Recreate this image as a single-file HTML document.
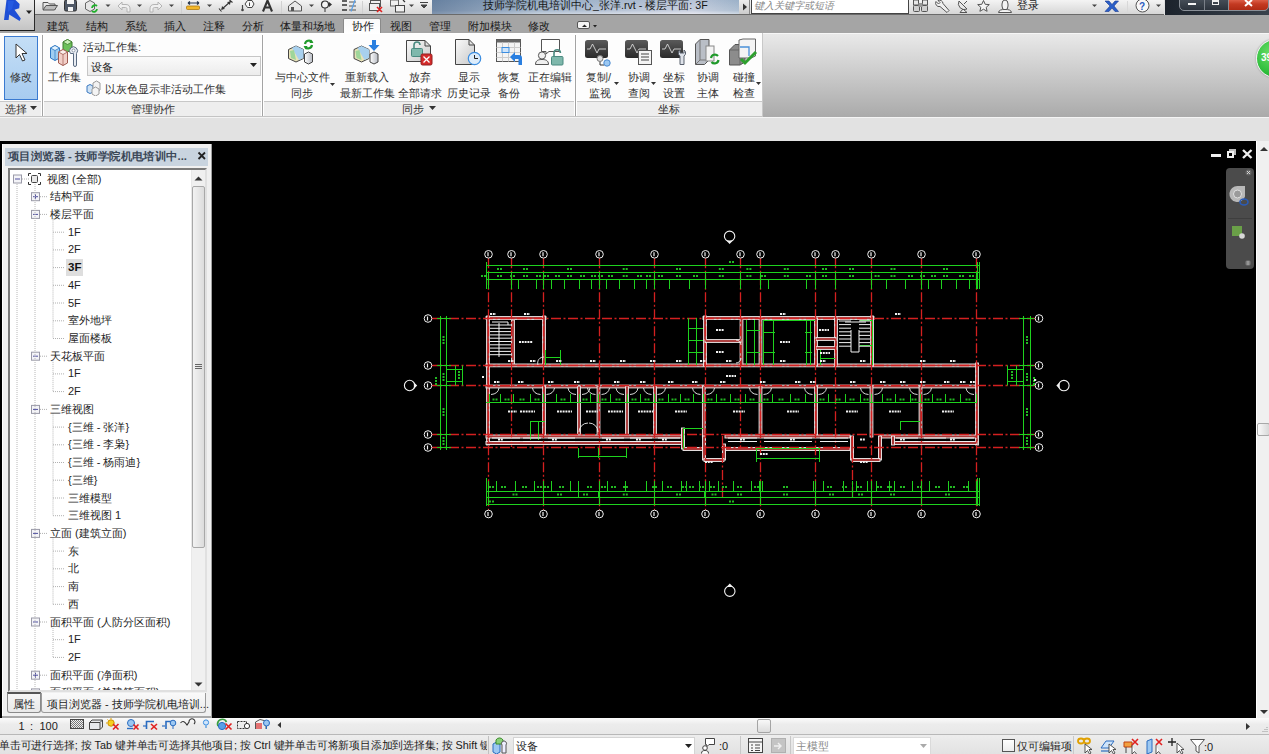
<!DOCTYPE html>
<html><head><meta charset="utf-8">
<style>
*{margin:0;padding:0;box-sizing:border-box}
html,body{width:1269px;height:754px;overflow:hidden;background:#e1e1e1;font-family:"Liberation Sans",sans-serif;font-size:12px;color:#222}
.a{position:absolute}
.t{position:absolute;white-space:nowrap;line-height:1}
</style></head><body>
<!-- QAT bar -->
<div class="a" style="left:0;top:0;width:1164px;height:15px;background:linear-gradient(#f4f4f4,#d6d6d6);border-bottom:1px solid #6a6a6a"></div>
<!-- QAT icons -->
<svg class="a" style="left:0;top:0" width="1269" height="15" viewBox="0 0 1269 15">
<path d="M43 2.5H48L49.5 4H55V9.5H43Z" fill="#e8e8e8" stroke="#555"/>
<path d="M43 10L46 5.5H57.5L54.5 10Z" fill="#bdbdbd" stroke="#555"/>
<rect x="64.5" y="0" width="12" height="11" rx="1.5" fill="#4f5866" stroke="#333"/>
<rect x="67" y="0" width="7" height="4" fill="#f4f4f4"/>
<rect x="68" y="7" width="5" height="4" fill="#f4f4f4"/>
<path d="M85.5 3L90 0.5L94.5 3V9L90 11.5L85.5 9Z" fill="#e6e6e6" stroke="#666"/>
<path d="M92 8a3 3 0 0 1 5 -2M97 9a3 3 0 0 1 -5 2" stroke="#1fb02a" stroke-width="1.8" fill="none"/>
<path d="M105.5 4.5H110.5L108 7Z" fill="#444"/>
<path d="M118 6L122 2V4.5H126C129 4.5 130 6.5 130 9V12H127V9C127 8 126.5 7.5 125.5 7.5H122V10Z" fill="#f0f0f0" stroke="#b4b4b4"/>
<path d="M137 4.5H142L139.5 7Z" fill="#444"/>
<path d="M162 6L158 2V4.5H154C151 4.5 150 6.5 150 9V12H153V9C153 8 153.5 7.5 154.5 7.5H158V10Z" fill="#f0f0f0" stroke="#b4b4b4"/>
<path d="M169 4.5H174L171.5 7Z" fill="#444"/>
<path d="M181.5 1V14" stroke="#d0d0d0"/>
<path d="M188 3H199M188 3L190 1.5M188 3L190 4.5M199 3L197 1.5M199 3L197 4.5" stroke="#2a3a50" stroke-width="1.2" fill="none"/>
<rect x="186.5" y="6" width="13" height="3.5" rx="1" fill="#f2b72a" stroke="#b07a10" stroke-width="0.8"/>
<path d="M207 4.5H212L209.5 7Z" fill="#444"/>
<path d="M221.5 9.5L230.5 1.5M219 8.5L221.5 11.5M229.5 0L232.5 2.5" stroke="#333" stroke-width="1.1" fill="none"/><path d="M221.5 9.5L222 6L225 9ZM230.5 1.5L230 5L227 2Z" fill="#333"/>
<path d="M245 4L247.5 0.5H252L254 4L252 7.5H247.5Z" fill="#f8f8f8" stroke="#444"/><path d="M249.5 2.5V6" stroke="#333" stroke-width="0.9"/>
<path d="M242.5 5V9.5" stroke="#444" stroke-width="1.2"/><circle cx="242.5" cy="10" r="1.3" fill="#444"/>
<path d="M263 11.5L267.5 0.5L272 11.5M264.8 7.5H270.2" stroke="#333" stroke-width="2.1" fill="none"/>
<path d="M281.5 1V14" stroke="#d0d0d0"/>
<path d="M288.5 6L295 1L301.5 6V11H288.5Z" fill="#e8e8e8" stroke="#555"/>
<rect x="291" y="7" width="3" height="4" fill="#555"/>
<path d="M309 4.5H314L311.5 7Z" fill="#444"/>
<circle cx="325" cy="4.5" r="3.5" fill="#f4f4f4" stroke="#333" stroke-width="1.2"/>
<path d="M328.5 4.5L332 4.5L329 2ZM329 4.5L332 4.5L329 7Z" fill="#333"/>
<path d="M325 8V12" stroke="#333"/>
<path d="M342 1H347M342 5H347M342 10H347" stroke="#333" stroke-width="1.5"/>
<path d="M349 2H356M349 6H356M349 10H356" stroke="#555" stroke-width="1"/>
<path d="M351 11.5L355 0" stroke="#5aa0e8" stroke-width="1.2"/>
<path d="M362.5 1V14" stroke="#d0d0d0"/>
<rect x="370.5" y="0.5" width="10" height="6" fill="#f0f0f0" stroke="#555"/>
<rect x="369.5" y="3.5" width="10" height="7" fill="#f0f0f0" stroke="#555"/>
<path d="M377 7L382 12M382 7L377 12" stroke="#e02020" stroke-width="1.6"/>
<rect x="390.5" y="0" width="8" height="6" fill="#f0f0f0" stroke="#666"/>
<rect x="395.5" y="5.5" width="9" height="6.5" fill="#f0f0f0" stroke="#444"/>
<path d="M403 0L405 2" stroke="#333" stroke-width="1.2"/>
<path d="M409 4.5H414L411.5 7Z" fill="#444"/>
<path d="M420 2.5H428M421 5H427L424 8Z" stroke="#444" fill="#444" stroke-width="1"/>
</svg>
<!-- title -->
<div class="a" style="left:432px;top:0;width:307px;height:14px;background:linear-gradient(90deg,rgba(50,80,120,0.55),rgba(50,80,120,0.15) 35%,rgba(255,230,240,0.2) 85%,rgba(60,90,130,0.1)),linear-gradient(#a6bbd0,#bccbdb 75%,#dfe7ef)"></div>
<div class="t" style="left:483px;top:0px;font-size:10.7px;color:#161616">技师学院机电培训中心_张洋.rvt - 楼层平面: 3F</div>
<!-- search -->
<div class="a" style="left:739px;top:0;width:11px;height:14px;background:linear-gradient(#eee,#ccc);border-right:1px solid #888"></div>
<div class="a" style="left:751px;top:0;width:158px;height:14px;background:#fff;border:1px solid #444;border-top:none"></div><svg class="a" style="left:742px;top:3px" width="6" height="8"><path d="M1 0.5L5 4L1 7.5Z" fill="#333"/></svg>
<div class="t" style="left:754px;top:1px;font-size:10px;color:#888;font-style:italic">键入关键字或短语</div>
<svg class="a" style="left:905px;top:0" width="260" height="15" viewBox="905 0 260 15">
<rect x="913.5" y="0" width="5" height="5" fill="#e8e8e8" stroke="#555"/><rect x="922.5" y="0" width="5" height="5" fill="#e8e8e8" stroke="#555"/>
<rect x="913.5" y="5.5" width="6" height="6" rx="1" fill="#cfcfcf" stroke="#555"/><rect x="921.5" y="5.5" width="6" height="6" rx="1" fill="#cfcfcf" stroke="#555"/><rect x="918.5" y="3" width="4" height="4" fill="#999"/>
<path d="M936 1.5a3.5 3.5 0 0 0 4 5L947 12.5L949 10.5L943 3.5a3.5 3.5 0 0 0 -5 -3L940 2.5L938.5 4Z" fill="#f0f0f0" stroke="#555"/>
<path d="M959 1a6 6 0 0 0 8 8Z" fill="#e8e8e8" stroke="#555"/><path d="M963 9L960 12.5H967Z" fill="#e8e8e8" stroke="#555"/><path d="M964 4L967 1" stroke="#555"/>
<path d="M983.5 0.5L985.2 4.3L989.3 4.6L986.2 7.3L987.1 11.3L983.5 9.2L979.9 11.3L980.8 7.3L977.7 4.6L981.8 4.3Z" fill="#f4f4f4" stroke="#555"/>
<path d="M1002 4a3 4 0 0 1 6 0V6a3 4 0 0 1 -6 0Z" fill="#f4f4f4" stroke="#555"/><path d="M998.5 12.5C999 10 1001 9.5 1005 9.5S1011 10 1011.5 12.5Z" fill="#f4f4f4" stroke="#555"/>
<path d="M1092 4.5H1097L1094.5 7Z" fill="#444"/>
<path d="M1105 1H1109L1112 4.5L1115 1H1118.5L1114 6L1118.5 11.5H1115L1112 8L1109 11.5H1105L1110 6Z" fill="#2b5fc8" stroke="#1a3a90" stroke-width="0.6"/>
<path d="M1127.5 1V14" stroke="#d8d8d8"/>
<circle cx="1142.5" cy="5.5" r="6.5" fill="#f8f8f8" stroke="#555"/>
<text x="1139" y="9.5" font-family="Liberation Sans" font-weight="bold" font-size="10" fill="#2a5bc0">?</text>
<path d="M1156 4.5H1161L1158.5 7Z" fill="#444"/>
</svg>
<div class="t" style="left:1017px;top:0px;font-size:11px;color:#1a1a1a">登录</div>
<!-- window ctrl -->
<div class="a" style="left:1165px;top:0;width:104px;height:15px;background:linear-gradient(90deg,#1c232c,#2e3640 60%,#3a424c)"></div>
<div class="a" style="left:1179px;top:-3px;width:90px;height:14px;border:1px solid #8a9098;border-radius:0 0 5px 5px;background:linear-gradient(#4a525c,#2c333c)"></div>
<div class="a" style="left:1204px;top:-2px;width:1px;height:12px;background:#7a8088"></div>
<div class="a" style="left:1228px;top:-3px;width:41px;height:14px;border:1px solid #8a9098;border-radius:0 0 5px 0;background:linear-gradient(#e8705a,#c43a22 50%,#b02a14)"></div>
<div class="a" style="left:1188px;top:3px;width:8px;height:2px;background:#f4f4f4"></div>
<div class="a" style="left:1212px;top:0px;width:7px;height:5px;border:1.5px solid #f0f0f0;border-top-width:2px"></div>
<svg class="a" style="left:1244px;top:0" width="10" height="7"><path d="M1 0L8 6M8 0L1 6" stroke="#fff" stroke-width="2"/></svg>
<!-- tab bar -->
<div class="a" style="left:0;top:15px;width:1269px;height:18px;background:#a5a5a5"></div>
<div class="a" style="left:343px;top:18px;width:38px;height:16px;background:linear-gradient(#fafafa,#ffffff);border:1px solid #8a8a8a;border-bottom:none;border-radius:2px 2px 0 0"></div>
<div class="t" style="left:47px;top:20.5px;font-size:11px;color:#1a1a1a">建筑</div>
<div class="t" style="left:86px;top:20.5px;font-size:11px;color:#1a1a1a">结构</div>
<div class="t" style="left:125px;top:20.5px;font-size:11px;color:#1a1a1a">系统</div>
<div class="t" style="left:164px;top:20.5px;font-size:11px;color:#1a1a1a">插入</div>
<div class="t" style="left:203px;top:20.5px;font-size:11px;color:#1a1a1a">注释</div>
<div class="t" style="left:242px;top:20.5px;font-size:11px;color:#1a1a1a">分析</div>
<div class="t" style="left:280px;top:20.5px;font-size:11px;color:#1a1a1a">体量和场地</div>
<div class="t" style="left:352px;top:20.5px;font-size:11px;color:#1a1a1a">协作</div>
<div class="t" style="left:390px;top:20.5px;font-size:11px;color:#1a1a1a">视图</div>
<div class="t" style="left:429px;top:20.5px;font-size:11px;color:#1a1a1a">管理</div>
<div class="t" style="left:468px;top:20.5px;font-size:11px;color:#1a1a1a">附加模块</div>
<div class="t" style="left:528px;top:20.5px;font-size:11px;color:#1a1a1a">修改</div>
<div class="a" style="left:577px;top:21px;width:13px;height:8px;background:#f4f4f4;border:1px solid #555;border-radius:2px"></div>
<svg class="a" style="left:578px;top:22px" width="20" height="8"><path d="M4 5L6.5 2.5L9 5Z" fill="#222"/><path d="M15 3H19L17 5.5Z" fill="#222"/></svg>
<!-- app button -->
<div class="a" style="left:0;top:0;width:35px;height:31px;background:linear-gradient(#ececec,#c4c4c4);border-right:1.5px solid #2a2a2a;border-bottom:1.5px solid #1a1a1a"></div>
<svg class="a" style="left:0;top:0" width="34" height="30"><path d="M6.5 0H15.5L19.6 4L19.2 8.2L14.5 9.8L20.8 18.5L19.6 21L9.2 14.5L8.6 20H4Z" fill="#1f4fd6"/><path d="M8 1H14L12 9L8 12Z" fill="#2a62ea" opacity="0.6"/><path d="M26 10.5H32L29 14Z" fill="#222"/></svg>
<!-- ribbon -->
<div class="a" style="left:0;top:33px;width:763px;height:84px;background:#fdfdfd;border-top:1px solid #fff"></div>
<div class="a" style="left:763px;top:33px;width:506px;height:84px;background:linear-gradient(#e9e9e9,#aaaaaa);border-top:1px solid #f6f6f6"></div>
<div class="a" style="left:0;top:101px;width:763px;height:16px;background:#eeeeee;border-top:1px solid #c8c8c8;border-bottom:1px solid #c4c4c4"></div>
<div class="a" style="left:42px;top:35px;width:1px;height:81px;background:#a4a4a4;box-shadow:-1px 0 #fff,1px 0 #fff"></div>
<div class="a" style="left:262px;top:35px;width:1px;height:81px;background:#a4a4a4;box-shadow:-1px 0 #fff,1px 0 #fff"></div>
<div class="a" style="left:575px;top:35px;width:1px;height:81px;background:#a4a4a4;box-shadow:-1px 0 #fff,1px 0 #fff"></div>
<div class="a" style="left:762px;top:33px;width:1px;height:84px;background:#c8c8c8"></div>
<!-- panel select -->
<div class="a" style="left:4px;top:36px;width:34px;height:64px;background:linear-gradient(#c4def6,#a8ccf0);border:1px solid #3a7ad0"></div>
<svg class="a" style="left:14px;top:43px" width="14" height="20"><path d="M2 1V15L5.5 11.5L8.5 18L11 17L8 10.5H13Z" fill="#fff" stroke="#333" stroke-width="1"/></svg>
<div class="t" style="left:10px;top:72px;font-size:11px;color:#333">修改</div>
<div class="t" style="left:5px;top:104px;font-size:11px;color:#333">选择</div>
<svg class="a" style="left:30px;top:106px" width="8" height="5"><path d="M0 0H7L3.5 4Z" fill="#333"/></svg>
<!-- panel worksets -->
<svg class="a" style="left:48px;top:38px" width="34" height="30">
<path d="M2.5 10L7 7.5L11.5 10V20L7 22.5L2.5 20Z" fill="#9fcdf0" stroke="#2f78c4"/>
<path d="M2.5 10L7 7.5L11.5 10L7 12.5Z" fill="#e4f2fc" stroke="#2f78c4" stroke-width="0.8"/>
<path d="M7 12.5V22.5" stroke="#2f78c4" stroke-width="0.7"/>
<path d="M15 4L19.5 1.5L24 4V11.5L19.5 14L15 11.5Z" fill="#6cc05a" stroke="#3a7a2a"/>
<path d="M15 4L19.5 1.5L24 4L19.5 6.5Z" fill="#c8f0b8" stroke="#3a7a2a" stroke-width="0.8"/>
<path d="M10.5 14L15 11.5L19.5 14V25L15 27.5L10.5 25Z" fill="#f2cfc8" stroke="#a05a50"/>
<path d="M10.5 14L15 11.5L19.5 14L15 16.5Z" fill="#fbeeea" stroke="#a05a50" stroke-width="0.8"/>
<path d="M15 16.5V27.5" stroke="#a05a50" stroke-width="0.7"/>
<path d="M22.5 15.5a4 4 0 1 1 6 0V27a1.5 1.5 0 0 1 -3 0h0V15.5Z" fill="#e8ecf2" stroke="#5a6a80"/>
<circle cx="25.5" cy="12.5" r="1.5" fill="#fff" stroke="#5a6a80" stroke-width="0.6"/>
</svg>
<div class="t" style="left:48px;top:72px;font-size:11px;color:#333">工作集</div>
<div class="t" style="left:83px;top:42px;font-size:11px;color:#333">活动工作集:</div>
<div class="a" style="left:87px;top:56px;width:174px;height:20px;background:linear-gradient(#fafafa,#ececec);border:1px solid #c6c6c6"></div>
<div class="t" style="left:91px;top:62px;font-size:11px;color:#222">设备</div>
<svg class="a" style="left:250px;top:63px" width="8" height="5"><path d="M0 0H7L3.5 4Z" fill="#222"/></svg>
<svg class="a" style="left:86px;top:80px" width="16" height="16"><path d="M1 6L4 4.5L7 6V12L4 13.5L1 12Z" fill="#cfe3f5" stroke="#3a78c0"/><path d="M7 3L10.5 1L14 3V10L10.5 12L7 10Z" fill="#f2f2f2" stroke="#9a9a9a"/><path d="M6 9L9.5 7L13 9V14L9.5 16L6 14Z" fill="#f4f4f4" stroke="#9a9a9a"/></svg>
<div class="t" style="left:105px;top:84px;font-size:11px;color:#333">以灰色显示非活动工作集</div>
<div class="t" style="left:131px;top:104px;font-size:11px;color:#333">管理协作</div>
<!-- panel sync -->
<div class="t" style="left:275px;top:72px;font-size:11px;color:#333">与中心文件</div>
<div class="t" style="left:291px;top:87.5px;font-size:11px;color:#333">同步</div>
<svg class="a" style="left:330px;top:83px" width="6" height="4"><path d="M0 0H5L2.5 3Z" fill="#333"/></svg>
<div class="t" style="left:345px;top:72px;font-size:11px;color:#333">重新载入</div>
<div class="t" style="left:340px;top:87.5px;font-size:11px;color:#333">最新工作集</div>
<div class="t" style="left:409px;top:72px;font-size:11px;color:#333">放弃</div>
<div class="t" style="left:398px;top:87.5px;font-size:11px;color:#333">全部请求</div>
<div class="t" style="left:458px;top:72px;font-size:11px;color:#333">显示</div>
<div class="t" style="left:447px;top:87.5px;font-size:11px;color:#333">历史记录</div>
<div class="t" style="left:498px;top:72px;font-size:11px;color:#333">恢复</div>
<div class="t" style="left:498px;top:87.5px;font-size:11px;color:#333">备份</div>
<div class="t" style="left:528px;top:72px;font-size:11px;color:#333">正在编辑</div>
<div class="t" style="left:539px;top:87.5px;font-size:11px;color:#333">请求</div>
<div class="t" style="left:402px;top:104px;font-size:11px;color:#333">同步</div>
<svg class="a" style="left:429px;top:106px" width="8" height="5"><path d="M0 0H7L3.5 4Z" fill="#333"/></svg>
<!-- panel coord -->
<div class="t" style="left:586px;top:72px;font-size:11px;color:#333">复制/</div>
<div class="t" style="left:589px;top:87.5px;font-size:11px;color:#333">监视</div>
<div class="t" style="left:628px;top:72px;font-size:11px;color:#333">协调</div>
<div class="t" style="left:628px;top:87.5px;font-size:11px;color:#333">查阅</div>
<div class="t" style="left:663px;top:72px;font-size:11px;color:#333">坐标</div>
<div class="t" style="left:663px;top:87.5px;font-size:11px;color:#333">设置</div>
<div class="t" style="left:697px;top:72px;font-size:11px;color:#333">协调</div>
<div class="t" style="left:697px;top:87.5px;font-size:11px;color:#333">主体</div>
<div class="t" style="left:733px;top:72px;font-size:11px;color:#333">碰撞</div>
<div class="t" style="left:733px;top:87.5px;font-size:11px;color:#333">检查</div>
<svg class="a" style="left:614px;top:82px" width="6" height="4"><path d="M0 0H5L2.5 3Z" fill="#333"/></svg>
<svg class="a" style="left:651px;top:82px" width="6" height="4"><path d="M0 0H5L2.5 3Z" fill="#333"/></svg>
<svg class="a" style="left:756px;top:82px" width="6" height="4"><path d="M0 0H5L2.5 3Z" fill="#333"/></svg>
<div class="t" style="left:658px;top:104px;font-size:11px;color:#333">坐标</div>
<svg class="a" style="left:0;top:0" width="1269" height="140" viewBox="0 0 1269 140">
<defs>
<linearGradient id="mon" x1="0" y1="0" x2="0" y2="1"><stop offset="0" stop-color="#5a5a5a"/><stop offset="1" stop-color="#2a2a2a"/></linearGradient>
<linearGradient id="doc" x1="0" y1="0" x2="1" y2="1"><stop offset="0" stop-color="#fafafa"/><stop offset="1" stop-color="#c8c8c8"/></linearGradient>
<linearGradient id="cyl" x1="0" y1="0" x2="1" y2="0"><stop offset="0" stop-color="#fff"/><stop offset="1" stop-color="#b8bcc4"/></linearGradient>
</defs>
<!-- sync -->
<g stroke="#444" stroke-width="1">
<path d="M288.5 49.5L296 46L303.5 49.5V58.5L296 62L288.5 58.5Z" fill="#e8e2b8"/>
<path d="M292 48L296 46L303.5 49.5V58L299 60Z" fill="#a8d0ee" stroke="none"/>
<path d="M290 51L294 50L296 60L291 58Z" fill="#9fd69a" stroke="none"/>
<path d="M304.5 54L308.5 52L312.5 54V62L308.5 64L304.5 62Z" fill="url(#cyl)"/>
</g>
<path d="M305 44a4 4 0 0 1 7 -2M312 45a4 4 0 0 1 -7 2" stroke="#1f9a2a" stroke-width="2.2" fill="none"/>
<path d="M311 39.5L313.5 43L309.5 43Z M306 49.5L303.5 46L307.5 46Z" fill="#1f9a2a"/>
<!-- reload -->
<g stroke="#444" stroke-width="1">
<path d="M354 49.5L361.5 46L369 49.5V58.5L361.5 62L354 58.5Z" fill="#e8e2b8"/>
<path d="M357.5 48L361.5 46L369 49.5V58L364.5 60Z" fill="#a8d0ee" stroke="none"/>
<path d="M355.5 51L359.5 50L361.5 60L356.5 58Z" fill="#9fd69a" stroke="none"/>
<path d="M370 54L374 52L378 54V62L374 64L370 62Z" fill="url(#cyl)"/>
</g>
<path d="M372 40H376V45H379.5L374 51L368.5 45H372Z" fill="#2a7fe0"/>
<!-- relinquish -->
<path d="M406.5 40.5H425L430.5 46V61.5H406.5Z" fill="url(#doc)" stroke="#444"/>
<path d="M425 40.5V46H430.5" fill="none" stroke="#444"/>
<path d="M414 48V45a3 3 0 0 1 6 0" fill="none" stroke="#4a8a80" stroke-width="1.6"/>
<rect x="411.5" y="48.5" width="11" height="8" rx="1" fill="#7fb8ac" stroke="#4a8a80"/>
<rect x="421" y="54" width="11" height="11" rx="1.5" fill="#d42a2a" stroke="#902020"/>
<path d="M423.5 56.5L429.5 62.5M429.5 56.5L423.5 62.5" stroke="#fff" stroke-width="1.3"/>
<!-- history -->
<path d="M455.5 39.5H469L474.5 45V64.5H455.5Z" fill="url(#doc)" stroke="#444"/>
<path d="M469 39.5V45H474.5" fill="none" stroke="#444"/>
<circle cx="474.5" cy="58.5" r="6.2" fill="#dcecfb" stroke="#3b8de0" stroke-width="1.2"/>
<path d="M474.5 55V58.5H478" stroke="#222" stroke-width="1" fill="none"/>
<!-- restore -->
<rect x="496.5" y="39.5" width="24" height="22" fill="#f4f4f4" stroke="#555"/>
<rect x="496.5" y="39.5" width="24" height="3" fill="#666"/>
<path d="M496.5 47.5H520.5M496.5 52.5H520.5M496.5 57.5H520.5M502.5 42.5V61.5M508.5 42.5V61.5M514.5 42.5V61.5" stroke="#ccc" stroke-width="1"/>
<rect x="502" y="47.5" width="7" height="5" fill="#cfe5fb" stroke="#3b8de0"/>
<path d="M510 57L515 52V55H519a3 3 0 0 1 3 3V65H518.5V59H515V62Z" fill="#2a7fe0"/>
<!-- editing requests -->
<path d="M541.5 39.5H559.5V51.5H549L546 54V51.5H541.5Z" fill="#fff" stroke="#555"/>
<circle cx="542" cy="55.5" r="3.6" fill="#f0f0f0" stroke="#555"/>
<path d="M535.5 64.5C535.5 60 539 59.5 542 59.5S548.5 60 548.5 64.5Z" fill="#f0f0f0" stroke="#555"/>
<path d="M554 56V53a3.2 3.2 0 0 1 6.4 0" fill="none" stroke="#4a8a80" stroke-width="1.6"/>
<rect x="551.5" y="56.5" width="11.5" height="8.5" rx="1" fill="#7fb8ac" stroke="#4a8a80"/>
<!-- copy monitor -->
<rect x="585" y="40" width="23" height="18" rx="2.5" fill="url(#mon)"/>
<path d="M587 49H590L592.5 44L597 53L599 49H606" stroke="#d8d8d8" stroke-width="0.9" fill="none"/>
<circle cx="600" cy="58.5" r="3" fill="#ddd" stroke="#777"/>
<path d="M600 62V65H604" stroke="#333" fill="none"/>
<circle cx="607" cy="63" r="3.2" fill="#9cc8f2" stroke="#4a8ad0"/>
<!-- coord review -->
<rect x="625" y="40" width="23" height="18" rx="2.5" fill="url(#mon)"/>
<path d="M627 49H630L632.5 44L637 53L639 49H646" stroke="#d8d8d8" stroke-width="0.9" fill="none"/>
<rect x="638.5" y="50.5" width="13" height="14" fill="#f4f4f4" stroke="#555"/>
<path d="M641 54H649M641 57H649M641 60H649" stroke="#444" stroke-width="1"/>
<!-- coord settings -->
<rect x="660" y="40" width="23" height="18" rx="2.5" fill="url(#mon)"/>
<path d="M662 49H665L667.5 44L672 53L674 49H681" stroke="#d8d8d8" stroke-width="0.9" fill="none"/>
<path d="M680 50a3.6 3.6 0 0 0 0 6V64.5H684V56a3.6 3.6 0 0 0 0 -6V53H680Z" fill="#dfe3ea" stroke="#59606c"/>
<!-- coord host -->
<path d="M695.5 44L700 39.5H709V60L704.5 64.5H695.5Z" fill="#b9bec6" stroke="#555"/>
<path d="M700 39.5V60H709M700 60L695.5 64.5" fill="none" stroke="#777"/>
<rect x="706" y="46" width="8" height="15" fill="#f4f4f4" stroke="#888"/>
<path d="M711 58a4 4 0 0 1 7 -2M718.5 60a4 4 0 0 1 -7 2" stroke="#1f9a2a" stroke-width="2.2" fill="none"/>
<!-- interference -->
<path d="M729.5 50L735 44.5H745V62L740 65H729.5Z" fill="#8c8c8c" stroke="#555"/>
<path d="M729.5 50H740V65M740 50L745 44.5" fill="none" stroke="#666"/>
<path d="M739 40L743 39H755.5V56L751 58H739Z" fill="#f4f4f4" stroke="#666"/>
<path d="M740 47H749V56" stroke="#4a90d8" stroke-width="1.3" fill="none"/>
<path d="M741 59L745 63L756 52" stroke="#2ea02e" stroke-width="3" fill="none"/>
</svg>

<!-- gray bar -->
<div class="a" style="left:0;top:117px;width:1269px;height:24px;background:#e2e2e2;border-top:1px solid #f4f4f4"></div>
<!-- canvas -->
<div class="a" style="left:0;top:141px;width:1256px;height:577px;background:#000"></div>
<!-- vscroll -->
<div class="a" style="left:1256px;top:141px;width:13px;height:577px;background:#f0f0f0;border-left:1px solid #fff"></div>
<svg class="a" style="left:1259px;top:146px" width="10" height="6"><path d="M1 5L5 1L9 5Z" fill="#333"/></svg>
<svg class="a" style="left:1259px;top:709px" width="10" height="6"><path d="M1 1L5 5L9 1Z" fill="#333"/></svg>
<div class="a" style="left:1257px;top:423px;width:13px;height:13px;background:linear-gradient(90deg,#fafafa,#d8d8d8);border:1px solid #a8a8a8;border-radius:2px"></div>
<!-- canvas controls -->
<div class="a" style="left:1211px;top:154px;width:10px;height:3px;background:#f0f0f0"></div>
<div class="a" style="left:1229px;top:149px;width:7px;height:6px;background:#bbb"></div>
<div class="a" style="left:1227px;top:151px;width:7px;height:7px;border:2px solid #f0f0f0;background:#000"></div>
<svg class="a" style="left:1242px;top:149px" width="11" height="10"><path d="M1 1L9.5 9M9.5 1L1 9" stroke="#f0f0f0" stroke-width="2.4"/></svg>
<!-- nav bar -->
<div class="a" style="left:1226px;top:168px;width:28px;height:101px;background:#4b4b4b;border-radius:4px"></div>
<svg class="a" style="left:1226px;top:168px" width="28" height="101">
<circle cx="22.5" cy="4.5" r="3" fill="#666"/><path d="M21 3L24 6M24 3L21 6" stroke="#ddd" stroke-width="0.9"/>
<path d="M11.5 18a8 8 0 1 0 7.5 10.5V18Z" fill="#b8b8b8"/>
<circle cx="11.5" cy="26" r="4" fill="#9a9a9a" stroke="#e0e0e0" stroke-width="1"/>
<path d="M14 34a4 3 0 0 1 8 0a4 3 0 0 1 -8 0" fill="none" stroke="#2a5cb8" stroke-width="1.6"/>
<path d="M2 50.5H26" stroke="#3e3e3e"/>
<rect x="6" y="58" width="10" height="10" fill="#6aa048"/>
<circle cx="16" cy="68" r="2.8" fill="#d8d8d8"/>
<circle cx="22" cy="95" r="3" fill="#666"/><path d="M20.5 94H23.5M20.5 96H23.5" stroke="#ddd" stroke-width="0.8"/>
</svg>
<!-- green sphere -->
<div class="a" style="left:1256px;top:39px;width:39px;height:39px;border-radius:50%;background:radial-gradient(circle at 40% 35%,#6ee06a,#2ebd3c 60%,#229a2e);border:1px solid #f4f4f4;box-shadow:0 0 2px #888"></div>
<div class="t" style="left:1261px;top:53px;font-size:10px;font-weight:bold;color:#fff">39</div>
<!-- view bar -->
<div class="a" style="left:0;top:718px;width:1269px;height:17px;background:linear-gradient(#fbfbfb,#ececec 40%,#e8e8e8);border-bottom:1px solid #b8b8b8"></div>
<div class="t" style="left:18.5px;top:720.5px;font-size:11px;color:#222">1</div><div class="t" style="left:30px;top:720.5px;font-size:11px;color:#222">:</div><div class="t" style="left:39.5px;top:720.5px;font-size:11px;color:#222">100</div>
<svg class="a" style="left:0;top:716px" width="290" height="18" viewBox="0 716 290 18">
<defs><pattern id="chk" width="2" height="2" patternUnits="userSpaceOnUse"><rect width="1" height="1" fill="#777"/><rect x="1" y="1" width="1" height="1" fill="#777"/></pattern></defs>
<rect x="70.5" y="719.5" width="13" height="9" fill="url(#chk)" stroke="#444"/>
<path d="M89.5 722.5L92 720H102.5V727L100 729.5H89.5Z" fill="#e6e8ec" stroke="#444"/><path d="M89.5 722.5H100V729.5M100 722.5L102.5 720" fill="none" stroke="#444"/>
<circle cx="111" cy="723" r="3.2" fill="#f5d020" stroke="#d09000"/><path d="M106 723H107M111 718V719M107.5 719.5L108.3 720.3" stroke="#e0a000"/>
<path d="M113 724L118.5 729.5M118.5 724L113 729.5" stroke="#e02020" stroke-width="1.6"/>
<circle cx="131" cy="723" r="3.5" fill="#9cc8f2" stroke="#2a6cc0"/><path d="M127 728.5H133" stroke="#2a6cc0" stroke-width="1.4"/>
<path d="M133.5 724.5L138.5 729.5M138.5 724.5L133.5 729.5" stroke="#e02020" stroke-width="1.6"/>
<path d="M146.5 729V721.5H154" stroke="#2a6cc0" stroke-width="1.6" fill="none"/><path d="M143 726H146" stroke="#2a6cc0" stroke-width="1.2"/>
<path d="M151 724L157 729.5M157 724L151 729.5" stroke="#e02020" stroke-width="1.6"/>
<path d="M166 729V721.5H172" stroke="#2a6cc0" stroke-width="1.6" fill="none"/><path d="M162 726H165" stroke="#2a6cc0" stroke-width="1.2"/>
<circle cx="173" cy="723" r="2.8" fill="#9cc8f2" stroke="#2a6cc0"/><path d="M173 726V729" stroke="#2a6cc0"/>
<path d="M180.5 723C183 720 185 722 187 725L189 722A3 3 0 1 1 194 724" stroke="#333" stroke-width="1.1" fill="none"/>
<circle cx="206" cy="722.5" r="2.6" fill="#cfe5fb" stroke="#3b8de0"/><path d="M206 725.5V728" stroke="#3b8de0" stroke-width="1.2"/>
<path d="M218 726A4.5 4.5 0 0 1 226.5 722" stroke="#3aa040" stroke-width="1.8" fill="none"/><circle cx="222" cy="726" r="3.6" fill="#5aa0e8" stroke="#2a6cc0"/>
<path d="M225.5 723.5L231.5 729.5M231.5 723.5L225.5 729.5" stroke="#e02020" stroke-width="1.6"/>
<path d="M237.5 721.5H246.5V728.5H237.5Z" fill="none" stroke="#333" stroke-dasharray="2 1"/><circle cx="247" cy="726" r="2.6" fill="#fff" stroke="#333"/>
<path d="M255.5 729V722L260 719.5L266 721V729" fill="none" stroke="#555"/><path d="M257 723V729M259 723V729M261 723V729" stroke="#e02020" stroke-width="1.2"/>
<circle cx="266.5" cy="723" r="3" fill="#9cc8f2" stroke="#2a6cc0"/><path d="M266.5 726V729" stroke="#2a6cc0"/>
<path d="M281 722L277.5 725L281 728Z" fill="#333"/>
</svg>
<!-- h scroll -->
<div class="a" style="left:757px;top:719px;width:14px;height:14px;background:linear-gradient(#f8f8f8,#dcdcdc);border:1px solid #a4a4a4;border-radius:2px"></div>
<svg class="a" style="left:1245px;top:722px" width="24" height="12"><path d="M1 1L5 4.5L1 8Z" fill="#333"/><path d="M21.5 9.5h1M19.5 9.5h1M21.5 7.5h1M17.5 9.5h1M19.5 7.5h1M21.5 5.5h1" stroke="#999"/></svg>
<!-- status -->
<div class="a" style="left:0;top:735px;width:1269px;height:19px;background:linear-gradient(#ededed,#e2e2e2)"></div>
<div class="a" style="left:0;top:734px;width:487px;height:20px;overflow:hidden"><div class="t" style="left:-1px;top:6px;font-size:11px;color:#1a1a1a;transform:scaleX(0.983);transform-origin:0 0">单击可进行选择; 按 Tab 键并单击可选择其他项目; 按 Ctrl 键并单击可将新项目添加到选择集; 按 Shift 键并单击可取消选择</div></div>
<div class="a" style="left:488px;top:736px;width:1px;height:18px;background:#c0c0c0"></div>
<svg class="a" style="left:492px;top:736px" width="16" height="18"><path d="M1 8L4.5 6L8 8V16L4.5 18L1 16Z" fill="#9cc8f2" stroke="#2a6cc0"/><path d="M4 4a4 4 0 0 1 7 0V8H4Z" fill="#8ad07a" stroke="#3b8a2a"/><path d="M10 9a2.5 2.5 0 1 1 4 0V17H10Z" fill="#eef" stroke="#555"/></svg>
<div class="a" style="left:513px;top:737px;width:182px;height:17px;background:#fff;border:1px solid #d4d4d4;border-bottom:none"></div>
<div class="t" style="left:516px;top:741px;font-size:11px;color:#222">设备</div>
<svg class="a" style="left:685px;top:744px" width="8" height="5"><path d="M0 0H7L3.5 4Z" fill="#222"/></svg>
<svg class="a" style="left:700px;top:737px" width="16" height="17"><path d="M5.5 1.5H14.5V7.5H9L7 9.5L6.5 7.5H5.5Z" fill="#fff" stroke="#444"/><circle cx="5" cy="11" r="2.3" fill="#fff" stroke="#444"/><path d="M1.5 16.5C1.5 14 3 13.5 5 13.5S8.5 14 8.5 16.5" fill="#fff" stroke="#444"/></svg>
<div class="t" style="left:719px;top:741px;font-size:11px;color:#222">:0</div>
<div class="a" style="left:740px;top:736px;width:1px;height:18px;background:#c8c8c8"></div>
<svg class="a" style="left:748px;top:738px" width="16" height="16"><rect x="0.5" y="0.5" width="14" height="14" fill="#f6f6f6" stroke="#444"/><path d="M0.5 4H14.5" stroke="#444"/><path d="M3 7H5M7 7H12M3 10H5M7 10H12M3 12.5H5M7 12.5H12" stroke="#444"/></svg>
<svg class="a" style="left:771px;top:738px" width="16" height="16"><rect x="0.5" y="0.5" width="14" height="14" fill="#c4c4c4" stroke="#b0b0b0"/><path d="M3 8H10M7 5L10 8L7 11" stroke="#f0f0f0" stroke-width="1.4" fill="none"/></svg>
<div class="a" style="left:790px;top:736px;width:1px;height:18px;background:#c8c8c8"></div>
<div class="a" style="left:793px;top:737px;width:138px;height:17px;background:#fff;border:1px solid #dadada;border-bottom:none"></div>
<div class="t" style="left:796px;top:741px;font-size:11px;color:#8a8a8a">主模型</div>
<svg class="a" style="left:920px;top:744px" width="8" height="5"><path d="M0 0H7L3.5 4Z" fill="#aaa"/></svg>
<div class="a" style="left:1002px;top:739px;width:13px;height:13px;background:linear-gradient(#fefefe,#ececec);border:1px solid #555"></div>
<div class="t" style="left:1017px;top:741px;font-size:11px;color:#222">仅可编辑项</div>
<div class="a" style="left:1073px;top:736px;width:1px;height:18px;background:#c8c8c8"></div>
<svg class="a" style="left:1075px;top:736px" width="145" height="18" viewBox="1075 736 145 18">
<path d="M1078 741a3 2.5 0 0 1 6 0a3 2.5 0 0 1 -6 0M1084 741a3 2.5 0 0 1 6 0a3 2.5 0 0 1 -6 0" fill="none" stroke="#e0a000" stroke-width="1.8"/>
<path d="M1085 744V753L1087.5 750.5L1089.5 754L1091 753L1089 749.5H1092Z" fill="#fff" stroke="#444" stroke-width="0.9"/>
<path d="M1101 748L1106 741H1114L1109 748Z" fill="#cfe5fb" stroke="#2a6cc0"/><path d="M1101 751H1110" stroke="#2a6cc0" stroke-width="1.2"/>
<path d="M1109 744V753L1111.5 750.5L1113.5 754L1115 753L1113 749.5H1116Z" fill="#fff" stroke="#444" stroke-width="0.9"/>
<path d="M1124 742H1132V747H1124Z" fill="#f2a040" stroke="#c04010"/><path d="M1126 747V753" stroke="#444"/>
<path d="M1132 739L1138 745M1138 739L1132 745" stroke="#e02020" stroke-width="1.6"/>
<path d="M1132 745V754L1134.5 751.5L1136.5 754" fill="#fff" stroke="#444" stroke-width="0.9"/>
<path d="M1147 741L1152 739V752L1147 754Z" fill="#9cc8f2" stroke="#2a6cc0"/><path d="M1156 739L1162 745M1162 739L1156 745" stroke="#e02020" stroke-width="1.6"/>
<path d="M1156 745V754L1158.5 751.5L1160.5 754" fill="#fff" stroke="#444" stroke-width="0.9"/>
<path d="M1172 738V746M1168 742H1176" stroke="#222" stroke-width="1.3"/><path d="M1177 743V753L1179.5 750.5L1181.5 754L1183 753L1181 749.5H1184Z" fill="#fff" stroke="#444" stroke-width="0.9"/>
<path d="M1190.5 739.5H1204.5L1199 746V753L1196 751V746Z" fill="#fff" stroke="#555"/>
</svg>
<div class="t" style="left:1204px;top:742px;font-size:11px;color:#222">:0</div>
<svg class="a" style="left:0;top:0" width="1269" height="754" viewBox="0 0 1269 754"><g fill="#a83838" stroke="#f2f2f2" stroke-width="0.9"><rect x="486.0" y="316.6" width="60.0" height="2.8"/><rect x="486.6" y="316.0" width="2.8" height="129.0"/><rect x="542.6" y="316.0" width="2.8" height="50.0"/><rect x="511.6" y="320.0" width="2.8" height="46.0"/><rect x="486.0" y="364.0" width="491.0" height="2.8"/><rect x="703.0" y="316.6" width="171.0" height="2.8"/><rect x="703.6" y="316.0" width="2.8" height="50.0"/><rect x="740.1" y="318.0" width="2.8" height="48.0"/><rect x="759.1" y="318.0" width="2.8" height="48.0"/><rect x="814.6" y="318.0" width="2.8" height="48.0"/><rect x="834.6" y="318.0" width="2.8" height="48.0"/><rect x="870.6" y="316.0" width="2.8" height="50.0"/><rect x="705.0" y="339.6" width="36.0" height="2.8"/><rect x="816.0" y="337.6" width="20.0" height="2.8"/><rect x="816.0" y="346.6" width="20.0" height="2.8"/><rect x="486.0" y="385.1" width="491.0" height="2.8"/><rect x="975.6" y="363.0" width="2.8" height="82.0"/><rect x="542.6" y="386.0" width="2.8" height="51.0"/><rect x="577.6" y="386.0" width="2.8" height="51.0"/><rect x="597.1" y="386.0" width="2.8" height="51.0"/><rect x="625.6" y="386.0" width="2.8" height="51.0"/><rect x="653.6" y="386.0" width="2.8" height="51.0"/><rect x="702.4" y="386.0" width="2.8" height="51.0"/><rect x="759.1" y="386.0" width="2.8" height="51.0"/><rect x="814.6" y="386.0" width="2.8" height="51.0"/><rect x="870.1" y="386.0" width="2.8" height="51.0"/><rect x="919.1" y="386.0" width="2.8" height="51.0"/><rect x="486.0" y="435.0" width="197.0" height="3.0"/><rect x="486.0" y="441.5" width="197.0" height="3.0"/><rect x="725.0" y="435.0" width="125.0" height="3.0"/><rect x="725.0" y="447.5" width="125.0" height="3.0"/><rect x="880.0" y="435.0" width="97.0" height="3.0"/><rect x="893.0" y="441.5" width="84.0" height="3.0"/><rect x="681.5" y="428.0" width="3.0" height="21.0"/><rect x="683.0" y="447.5" width="20.0" height="3.0"/><rect x="702.5" y="436.0" width="3.0" height="24.0"/><rect x="722.5" y="444.0" width="3.0" height="16.0"/><rect x="704.0" y="458.5" width="20.0" height="3.0"/><rect x="850.5" y="436.0" width="3.0" height="24.0"/><rect x="878.5" y="436.0" width="3.0" height="24.0"/><rect x="852.0" y="458.5" width="28.0" height="3.0"/><rect x="891.5" y="436.0" width="3.0" height="9.0"/></g><path d="M488.5 258.3V510M511.5 258.3V447M543.5 258.3V510M599.5 258.3V510M654.5 258.3V510M705.5 258.3V510M740.5 258.3V447M760.5 258.3V510M815.5 258.3V510M835.5 258.3V447M871.5 258.3V510M921.5 258.3V510M976.5 258.3V510M722.5 436V498M852.5 436V498M432 318.5H1035M432 365.5H1035M432 385.5H1035M432 434.5H1035M432 447.5H1035" stroke="#d42020" stroke-width="1.3" stroke-dasharray="10 2.5 2 2.5" fill="none"/><path d="M486 265.5H979M486 272.5H979M486 279.5H979M486.5 262V289M977.5 262V289M979.5 262V289M518.5 279.5V289M536.5 279.5V289M551.5 279.5V289M564.5 279.5V289M579.5 279.5V289M591.5 279.5V289M606.5 279.5V289M619.5 279.5V289M634.5 279.5V289M646.5 279.5V289M669.5 279.5V289M689.5 279.5V289M768.5 279.5V289M806.5 279.5V289M886.5 279.5V289M905.5 279.5V289M928.5 279.5V289M941.5 279.5V289M956.5 279.5V289M969.5 279.5V289M488.5 272V289M511.5 272V289M543.5 272V289M599.5 272V289M654.5 272V289M705.5 272V289M740.5 272V289M760.5 272V289M815.5 272V289M835.5 272V289M871.5 272V289M921.5 272V289M976.5 272V289M486 491.5H979M486 497.5H979M486 504.5H979M486.5 478V506M977.5 478V506M979.5 478V506M496.5 481V491.5M515.5 481V491.5M534.5 481V491.5M551.5 481V491.5M570.5 481V491.5M578.5 481V491.5M607.5 481V491.5M625.5 481V491.5M646.5 481V491.5M662.5 481V491.5M681.5 481V491.5M686.5 481V491.5M699.5 481V491.5M709.5 481V491.5M718.5 481V491.5M733.5 481V491.5M751.5 481V491.5M759.5 481V491.5M762.5 481V491.5M813.5 481V491.5M823.5 481V491.5M843.5 481V491.5M852.5 481V491.5M856.5 481V491.5M867.5 481V491.5M876.5 481V491.5M889.5 481V491.5M894.5 481V491.5M912.5 481V491.5M929.5 481V491.5M948.5 481V491.5M968.5 481V491.5M488.5 481V505M543.5 481V505M599.5 481V505M654.5 481V505M705.5 481V505M760.5 481V505M815.5 481V505M871.5 481V505M921.5 481V505M976.5 481V505M543.5 491.5V498M578.5 491.5V498M598.5 491.5V498M654.5 491.5V498M704.5 491.5V498M852.5 491.5V498M440.5 316V450M446.5 316V450M1023.5 316V450M1030.5 316V450M437 318.5H451M1019 318.5H1034M437 365.5H451M1019 365.5H1034M437 385.5H451M1019 385.5H1034M437 434.5H451M1019 434.5H1034M437 447.5H451M1019 447.5H1034M455.5 365.4V385.6M462.5 365.4V385.6M447 369.5H463M447 381.5H463M1007.5 365.4V385.6M1016.5 365.4V385.6M1007 369.5H1023M1007 381.5H1023M486 402.5H977M489.5 394V402.5M500.5 394V402.5M513.5 394V402.5M530.5 394V402.5M543.5 394V402.5M556.5 394V402.5M570.5 394V402.5M579.5 394V402.5M590.5 394V402.5M598.5 394V402.5M610.5 394V402.5M627.5 394V402.5M640.5 394V402.5M654.5 394V402.5M668.5 394V402.5M680.5 394V402.5M693.5 394V402.5M703.5 394V402.5M716.5 394V402.5M730.5 394V402.5M745.5 394V402.5M760.5 394V402.5M772.5 394V402.5M790.5 394V402.5M805.5 394V402.5M815.5 394V402.5M828.5 394V402.5M845.5 394V402.5M860.5 394V402.5M871.5 394V402.5M882.5 394V402.5M895.5 394V402.5M910.5 394V402.5M920.5 394V402.5M932.5 394V402.5M945.5 394V402.5M960.5 394V402.5M976.5 394V402.5M578 456.5H627M578.5 448V458M598.5 448V458M626.5 448V458M756 458.5H820M756.5 448V462M819.5 448V462M756 448.5H820M683 428.5H703M683.5 428V449M872.5 320V365M860 320.5H872M860 345.5H872M688.5 318V365M696.5 318V365M688 340.5H703M688 328.5H703M688 352.5H703M545.5 350V365M560.5 350V365M545 357.5H560M530 421.5H545M530.5 421V440M538.5 421V440M900 421.5H920M900.5 421V430M746.5 320V365M754.5 320V365M746 330.5H760M746 352.5H760M763.5 320V365M773.5 320V365M806.5 320V365M810.5 320V365M763 332.5H775M763 352.5H775M805 332.5H812M805 352.5H812M763 320.5H815M820 358.5H835M820.5 350V365" stroke="#1ed21e" stroke-width="1" fill="none"/><path d="M497.0 269h6M523.0 269h6M567.0 269h6M622.7 269h6M676.0 269h6M718.8 269h6M746.4 269h6M783.8 269h6M822.0 269h6M849.0 269h6M890.5 269h6M943.0 269h6M729.0 262h6M481.0 276h6M497.0 276h6M510.0 276h6M523.0 276h6M536.0 276h6M544.0 276h6M555.0 276h6M567.0 276h6M580.0 276h6M591.0 276h6M598.0 276h6M608.0 276h6M622.7 276h6M637.0 276h6M646.0 276h6M658.0 276h6M676.0 276h6M693.0 276h6M718.8 276h6M746.4 276h6M761.0 276h6M783.8 276h6M806.0 276h6M822.0 276h6M849.0 276h6M874.6 276h6M890.5 276h6M908.0 276h6M920.0 276h6M931.0 276h6M943.0 276h6M959.0 276h6M969.0 276h6M489.0 487h6M501.0 487h6M522.0 487h6M537.0 487h6M544.0 487h6M559.0 487h6M587.0 487h6M601.0 487h6M611.0 487h6M623.0 487h6M652.0 487h6M667.0 487h6M682.0 487h6M689.0 487h6M699.0 487h6M710.0 487h6M722.0 487h6M737.0 487h6M754.0 487h6M783.0 487h6M827.0 487h6M842.0 487h6M857.0 487h6M877.0 487h6M887.0 487h6M900.0 487h6M917.0 487h6M935.0 487h6M950.0 487h6M963.0 487h6M512.5 494.5h6M557.0 494.5h6M583.0 494.5h6M622.8 494.5h6M676.0 494.5h6M711.5 494.5h6M737.0 494.5h6M783.0 494.5h6M829.0 494.5h6M858.0 494.5h6M890.0 494.5h6M945.0 494.5h6M489.0 501.5h6M729.0 501.5h6M492.5 399.5h5M504.5 399.5h5M519.5 399.5h5M534.5 399.5h5M560.5 399.5h5M582.5 399.5h5M601.5 399.5h5M615.5 399.5h5M631.5 399.5h5M644.5 399.5h5M658.5 399.5h5M671.5 399.5h5M684.5 399.5h5M707.5 399.5h5M720.5 399.5h5M734.5 399.5h5M749.5 399.5h5M763.5 399.5h5M778.5 399.5h5M794.5 399.5h5M819.5 399.5h5M835.5 399.5h5M849.5 399.5h5M863.5 399.5h5M886.5 399.5h5M899.5 399.5h5M911.5 399.5h5M924.5 399.5h5M936.5 399.5h5M949.5 399.5h5M965.5 399.5h5" stroke="#22b822" stroke-width="2" stroke-dasharray="2 1" fill="none"/><path d="M443.5 336v8M443.5 373v8M443.5 408v8M443.5 437v8M1027 336v8M1027 373v8M1027 408v8M1027 437v8M459 371v8M1012 371v8M436 377v8M1034 377v8" stroke="#22b822" stroke-width="2" stroke-dasharray="2 1" fill="none"/><path d="M492 438H520M492 441.5H520M523 438H541M523 441.5H541M548 438H575M548 441.5H575M602 438H624M602 441.5H624M630 438H652M630 441.5H652M658 438H680M658 441.5H680M728 438H757M728 441.5H757M764 438H812M764 441.5H812M820 438H848M820 441.5H848M896 438H918M896 441.5H918M924 438H946M924 441.5H946M950 438H974M950 441.5H974" stroke="#f2f2f2" stroke-width="1" fill="none"/><path d="M490 325.0H511M490 328.3H511M490 331.6H511M490 334.9H511M490 338.2H511M490 341.5H511M490 344.8H511M490 348.1H511M490 351.4H511M490 354.7H511M499 323V357M492 322H508V325M839 321.0H851M859 321.0H870M839 324.6H851M859 324.6H870M839 328.2H851M859 328.2H870M839 331.8H851M859 331.8H870M839 335.4H851M859 335.4H870M839 339.0H851M859 339.0H870M839 342.6H851M859 342.6H870M839 346.2H851M859 346.2H870M851 330V352H859V330M845 322H866" stroke="#f2f2f2" stroke-width="1" fill="none"/><path d="M499 388q-1 6 -8 6.5M532.5 388q1 6 8 6.5M554.5 388q-1 6 -8 6.5M568 388q1 6 8 6.5M590 388q-1 6 -8 6.5M587.5 388q1 6 8 6.5M609.5 388q-1 6 -8 6.5M616 388q1 6 8 6.5M638 388q-1 6 -8 6.5M643.5 388q1 6 8 6.5M665.5 388q-1 6 -8 6.5M692.5 388q1 6 8 6.5M714.5 388q-1 6 -8 6.5M749.5 388q1 6 8 6.5M771.5 388q-1 6 -8 6.5M804.5 388q1 6 8 6.5M826.5 388q-1 6 -8 6.5M860.5 388q1 6 8 6.5M882.5 388q-1 6 -8 6.5M909.5 388q1 6 8 6.5M931.5 388q-1 6 -8 6.5M966 388q1 6 8 6.5M579 432a9 9 0 0 1 9 -9M598 432a9 9 0 0 0 -9 -9M538 365a6 6 0 0 1 6 -8M741 345a5 5 0 0 0 -5 -5M741 358a5 5 0 0 1 -5 5" stroke="#f2f2f2" stroke-width="0.9" fill="none"/><path d="M494 382h6M518 382h6M548 382h6M574 382h6M614 382h6M640 382h6M668 382h6M692 382h6M720 382h6M760 382h6M795 382h6M810 382h6M850 382h6M880 382h6M900 382h6M920 382h6M944 382h6M960 382h6M970 382h6M508 361h6M530 361h6M556 361h6M590 361h6M620 361h6M650 361h6M676 361h6M700 361h6M726 361h6M780 361h6M820 361h6M860 361h6M920 361h6M950 361h6M490 314h6M524 314h6M780 314h6M895 314h6M508 411.5h9M520 411.5h15M557 411.5h15M586 411.5h12M608 411.5h15M638 411.5h15M675 411.5h12M733 411.5h12M787 411.5h12M846 411.5h12M889 411.5h12M942 411.5h12M519 342h14M716 330h8M716 352h8M780 342h10M819 330h10M820 353h10M726 376h10M482 377h2M498 439.5h5M552 439.5h5M606 439.5h5M636 439.5h5M662 439.5h5M740 439.5h5M790 439.5h5M860 439.5h5M900 439.5h5M950 439.5h5M705 462h8M760 454h8M860 462h8M1034 380h3" stroke="#f2f2f2" stroke-width="2.2" stroke-dasharray="2 0.8" fill="none"/><g fill="none" stroke="#f2f2f2" stroke-width="1"><circle cx="488.5" cy="254.3" r="3.8"/><circle cx="511.5" cy="254.3" r="3.8"/><circle cx="543.5" cy="254.3" r="3.8"/><circle cx="599.5" cy="254.3" r="3.8"/><circle cx="654.5" cy="254.3" r="3.8"/><circle cx="705.5" cy="254.3" r="3.8"/><circle cx="740.5" cy="254.3" r="3.8"/><circle cx="760.5" cy="254.3" r="3.8"/><circle cx="815.5" cy="254.3" r="3.8"/><circle cx="835.5" cy="254.3" r="3.8"/><circle cx="871.5" cy="254.3" r="3.8"/><circle cx="921.5" cy="254.3" r="3.8"/><circle cx="976.5" cy="254.3" r="3.8"/><circle cx="488.5" cy="514" r="3.8"/><circle cx="543.5" cy="514" r="3.8"/><circle cx="599.5" cy="514" r="3.8"/><circle cx="654.5" cy="514" r="3.8"/><circle cx="705.5" cy="514" r="3.8"/><circle cx="760.5" cy="514" r="3.8"/><circle cx="815.5" cy="514" r="3.8"/><circle cx="871.5" cy="514" r="3.8"/><circle cx="921.5" cy="514" r="3.8"/><circle cx="976.5" cy="514" r="3.8"/><circle cx="428" cy="318.5" r="3.8"/><circle cx="1039" cy="318.5" r="3.8"/><circle cx="428" cy="365.5" r="3.8"/><circle cx="1039" cy="365.5" r="3.8"/><circle cx="428" cy="385.5" r="3.8"/><circle cx="1039" cy="385.5" r="3.8"/><circle cx="428" cy="434.5" r="3.8"/><circle cx="1039" cy="434.5" r="3.8"/><circle cx="428" cy="447.5" r="3.8"/><circle cx="1039" cy="447.5" r="3.8"/></g><path d="M488.0 252.3v4M511.0 252.3v4M543.0 252.3v4M599.0 252.3v4M654.0 252.3v4M705.0 252.3v4M740.0 252.3v4M760.0 252.3v4M815.0 252.3v4M835.0 252.3v4M871.0 252.3v4M921.0 252.3v4M976.0 252.3v4M488.0 512v4M543.0 512v4M599.0 512v4M654.0 512v4M705.0 512v4M760.0 512v4M815.0 512v4M871.0 512v4M921.0 512v4M976.0 512v4M427.5 316.5v4M1038.5 316.5v4M427.5 363.5v4M1038.5 363.5v4M427.5 383.5v4M1038.5 383.5v4M427.5 432.5v4M1038.5 432.5v4M427.5 445.5v4M1038.5 445.5v4" stroke="#f2f2f2" stroke-width="1.2" fill="none"/><g fill="none" stroke="#f2f2f2" stroke-width="1.1"><g transform="translate(729.6 236.3) rotate(0)"><circle r="5.2"/><path d="M-2 4.8L0 6.8L2 4.8Z" fill="#f2f2f2"/></g><g transform="translate(729.8 591.2) rotate(180)"><circle r="5.2"/><path d="M-2 4.8L0 6.8L2 4.8Z" fill="#f2f2f2"/></g><g transform="translate(409.6 385.5) rotate(-90)"><circle r="5.2"/><path d="M-2 4.8L0 6.8L2 4.8Z" fill="#f2f2f2"/></g><g transform="translate(1063.9 385.6) rotate(90)"><circle r="5.2"/><path d="M-2 4.8L0 6.8L2 4.8Z" fill="#f2f2f2"/></g></g></svg>
<!-- project browser -->
<div class="a" style="left:2px;top:144px;width:210px;height:574px;background:#f0f0f0;border-left:1px solid #fff;border-right:1px solid #a0a0a0"></div>
<div class="a" style="left:5px;top:148px;width:203px;height:18px;background:#c9d4df"></div>
<div class="t" style="left:8px;top:151px;font-size:11px;font-weight:bold;color:#3b4757;transform:scaleX(1.035);transform-origin:0 0">项目浏览器 - 技师学院机电培训中...</div>
<svg class="a" style="left:197px;top:151px" width="10" height="10"><path d="M1.5 1.5L8 8M8 1.5L1.5 8" stroke="#222" stroke-width="1.8"/></svg>
<div class="a" style="left:8px;top:168px;width:199px;height:524px;background:#fff;border:2px solid #7a7a7a;border-right-color:#e0e0e0;border-bottom-color:#e0e0e0;overflow:hidden">
<svg class="a" style="left:0;top:0" width="197" height="520"><rect x="3.5" y="5.0" width="8" height="8" fill="#f4f4f8" stroke="#9a9aa8"/><path d="M5 9.0H10" stroke="#5050a0" stroke-width="1"/><path d="M12 9.0H19" stroke="#b0b0b0" stroke-dasharray="1 1"/><rect x="21.5" y="22.7" width="8" height="8" fill="#f4f4f8" stroke="#9a9aa8"/><path d="M23 26.7H28" stroke="#5050a0" stroke-width="1"/><path d="M25.5 24.2V29.2" stroke="#5050a0" stroke-width="1"/><path d="M30 26.7H37" stroke="#b0b0b0" stroke-dasharray="1 1"/><rect x="21.5" y="40.4" width="8" height="8" fill="#f4f4f8" stroke="#9a9aa8"/><path d="M23 44.4H28" stroke="#5050a0" stroke-width="1"/><path d="M30 44.4H37" stroke="#b0b0b0" stroke-dasharray="1 1"/><path d="M43 62.2H55" stroke="#b0b0b0" stroke-dasharray="1 1"/><path d="M43 79.9H55" stroke="#b0b0b0" stroke-dasharray="1 1"/><path d="M43 97.6H55" stroke="#b0b0b0" stroke-dasharray="1 1"/><path d="M43 115.3H55" stroke="#b0b0b0" stroke-dasharray="1 1"/><path d="M43 133.0H55" stroke="#b0b0b0" stroke-dasharray="1 1"/><path d="M43 150.8H55" stroke="#b0b0b0" stroke-dasharray="1 1"/><path d="M43 168.5H55" stroke="#b0b0b0" stroke-dasharray="1 1"/><rect x="21.5" y="182.2" width="8" height="8" fill="#f4f4f8" stroke="#9a9aa8"/><path d="M23 186.2H28" stroke="#5050a0" stroke-width="1"/><path d="M30 186.2H37" stroke="#b0b0b0" stroke-dasharray="1 1"/><path d="M43 203.9H55" stroke="#b0b0b0" stroke-dasharray="1 1"/><path d="M43 221.6H55" stroke="#b0b0b0" stroke-dasharray="1 1"/><rect x="21.5" y="235.4" width="8" height="8" fill="#f4f4f8" stroke="#9a9aa8"/><path d="M23 239.4H28" stroke="#5050a0" stroke-width="1"/><path d="M30 239.4H37" stroke="#b0b0b0" stroke-dasharray="1 1"/><path d="M43 257.1H55" stroke="#b0b0b0" stroke-dasharray="1 1"/><path d="M43 274.8H55" stroke="#b0b0b0" stroke-dasharray="1 1"/><path d="M43 292.5H55" stroke="#b0b0b0" stroke-dasharray="1 1"/><path d="M43 310.2H55" stroke="#b0b0b0" stroke-dasharray="1 1"/><path d="M43 328.0H55" stroke="#b0b0b0" stroke-dasharray="1 1"/><path d="M43 345.7H55" stroke="#b0b0b0" stroke-dasharray="1 1"/><rect x="21.5" y="359.4" width="8" height="8" fill="#f4f4f8" stroke="#9a9aa8"/><path d="M23 363.4H28" stroke="#5050a0" stroke-width="1"/><path d="M30 363.4H37" stroke="#b0b0b0" stroke-dasharray="1 1"/><path d="M43 381.1H55" stroke="#b0b0b0" stroke-dasharray="1 1"/><path d="M43 398.8H55" stroke="#b0b0b0" stroke-dasharray="1 1"/><path d="M43 416.6H55" stroke="#b0b0b0" stroke-dasharray="1 1"/><path d="M43 434.3H55" stroke="#b0b0b0" stroke-dasharray="1 1"/><rect x="21.5" y="448.0" width="8" height="8" fill="#f4f4f8" stroke="#9a9aa8"/><path d="M23 452.0H28" stroke="#5050a0" stroke-width="1"/><path d="M30 452.0H37" stroke="#b0b0b0" stroke-dasharray="1 1"/><path d="M43 469.7H55" stroke="#b0b0b0" stroke-dasharray="1 1"/><path d="M43 487.4H55" stroke="#b0b0b0" stroke-dasharray="1 1"/><rect x="21.5" y="501.2" width="8" height="8" fill="#f4f4f8" stroke="#9a9aa8"/><path d="M23 505.2H28" stroke="#5050a0" stroke-width="1"/><path d="M25.5 502.7V507.7" stroke="#5050a0" stroke-width="1"/><path d="M30 505.2H37" stroke="#b0b0b0" stroke-dasharray="1 1"/><rect x="21.5" y="518.9" width="8" height="8" fill="#f4f4f8" stroke="#9a9aa8"/><path d="M23 522.9H28" stroke="#5050a0" stroke-width="1"/><path d="M25.5 520.4V525.4" stroke="#5050a0" stroke-width="1"/><path d="M30 522.9H37" stroke="#b0b0b0" stroke-dasharray="1 1"/><path d="M7 14V530" stroke="#b8b8b8" stroke-dasharray="1 1"/><path d="M25 14V530" stroke="#b8b8b8" stroke-dasharray="1 1"/><path d="M43 48.4V168.5" stroke="#b8b8b8" stroke-dasharray="1 1"/><path d="M43 190.2V221.6" stroke="#b8b8b8" stroke-dasharray="1 1"/><path d="M43 243.4V345.7" stroke="#b8b8b8" stroke-dasharray="1 1"/><path d="M43 367.4V434.3" stroke="#b8b8b8" stroke-dasharray="1 1"/><path d="M43 456.0V487.4" stroke="#b8b8b8" stroke-dasharray="1 1"/><path d="M18.5 6V3.5H21M28 3.5H30.5V6M30.5 12V14.5H28M21 14.5H18.5V12" stroke="#333" fill="none"/><rect x="21.5" y="5.5" width="6" height="7" rx="1" fill="#e8e8e8" stroke="#444"/></svg>
<div class="t" style="left:37px;top:3.5px;font-size:11px;color:#1e1e1e">视图 (全部)</div>
<div class="t" style="left:40px;top:21.2px;font-size:11px;color:#1e1e1e">结构平面</div>
<div class="t" style="left:40px;top:38.9px;font-size:11px;color:#1e1e1e">楼层平面</div>
<div class="t" style="left:58px;top:56.7px;font-size:11px;color:#1e1e1e">1F</div>
<div class="t" style="left:58px;top:74.4px;font-size:11px;color:#1e1e1e">2F</div>
<div class="a" style="left:56px;top:89.1px;width:17px;height:17px;background:#dedede"></div>
<div class="t" style="left:58px;top:92.1px;font-size:11.5px;font-weight:bold;color:#111">3F</div>
<div class="t" style="left:58px;top:109.8px;font-size:11px;color:#1e1e1e">4F</div>
<div class="t" style="left:58px;top:127.5px;font-size:11px;color:#1e1e1e">5F</div>
<div class="t" style="left:58px;top:145.3px;font-size:11px;color:#1e1e1e">室外地坪</div>
<div class="t" style="left:58px;top:163.0px;font-size:11px;color:#1e1e1e">屋面楼板</div>
<div class="t" style="left:40px;top:180.7px;font-size:11px;color:#1e1e1e">天花板平面</div>
<div class="t" style="left:58px;top:198.4px;font-size:11px;color:#1e1e1e">1F</div>
<div class="t" style="left:58px;top:216.1px;font-size:11px;color:#1e1e1e">2F</div>
<div class="t" style="left:40px;top:233.9px;font-size:11px;color:#1e1e1e">三维视图</div>
<div class="t" style="left:58px;top:251.6px;font-size:11px;color:#1e1e1e">{三维 - 张洋}</div>
<div class="t" style="left:58px;top:269.3px;font-size:11px;color:#1e1e1e">{三维 - 李枭}</div>
<div class="t" style="left:58px;top:287.0px;font-size:11px;color:#1e1e1e">{三维 - 杨雨迪}</div>
<div class="t" style="left:58px;top:304.7px;font-size:11px;color:#1e1e1e">{三维}</div>
<div class="t" style="left:58px;top:322.5px;font-size:11px;color:#1e1e1e">三维模型</div>
<div class="t" style="left:58px;top:340.2px;font-size:11px;color:#1e1e1e">三维视图 1</div>
<div class="t" style="left:40px;top:357.9px;font-size:11px;color:#1e1e1e">立面 (建筑立面)</div>
<div class="t" style="left:58px;top:375.6px;font-size:11px;color:#1e1e1e">东</div>
<div class="t" style="left:58px;top:393.3px;font-size:11px;color:#1e1e1e">北</div>
<div class="t" style="left:58px;top:411.1px;font-size:11px;color:#1e1e1e">南</div>
<div class="t" style="left:58px;top:428.8px;font-size:11px;color:#1e1e1e">西</div>
<div class="t" style="left:40px;top:446.5px;font-size:11px;color:#1e1e1e">面积平面 (人防分区面积)</div>
<div class="t" style="left:58px;top:464.2px;font-size:11px;color:#1e1e1e">1F</div>
<div class="t" style="left:58px;top:481.9px;font-size:11px;color:#1e1e1e">2F</div>
<div class="t" style="left:40px;top:499.7px;font-size:11px;color:#1e1e1e">面积平面 (净面积)</div>
<div class="t" style="left:40px;top:517.4px;font-size:11px;color:#1e1e1e">面积平面 (总建筑面积)</div>
<div class="a" style="left:181px;top:0;width:15px;height:520px;background:#f0f0f0;border-left:1px solid #e8e8e8"></div>
<svg class="a" style="left:184px;top:6px" width="9" height="5"><path d="M0.5 4.5L4.5 0.5L8.5 4.5Z" fill="#333"/></svg>
<div class="a" style="left:182px;top:16px;width:13px;height:362px;background:linear-gradient(90deg,#f2f2f2,#dcdcdc);border:1px solid #a8a8a8;border-radius:2px"></div>
<svg class="a" style="left:185px;top:194px" width="7" height="6"><path d="M0 0.5H7M0 2.5H7M0 4.5H7" stroke="#666"/></svg>
<svg class="a" style="left:184px;top:512px" width="9" height="5"><path d="M0.5 0.5L4.5 4.5L8.5 0.5Z" fill="#333"/></svg>
</div>
<div class="a" style="left:41px;top:693px;width:165px;height:20px;background:linear-gradient(#fafafa,#ececec);border:1px solid #9a9a9a;border-top:none;border-radius:0 0 3px 3px"></div>
<div class="a" style="left:7px;top:692px;width:34px;height:21px;background:linear-gradient(#f6f6f6,#e8e8e8);border:1px solid #8a8a8a;border-top:2px solid #555;border-radius:0 0 3px 3px"></div>
<div class="t" style="left:12.5px;top:699px;font-size:11px;color:#222">属性</div>
<div class="t" style="left:47px;top:699px;font-size:11px;color:#222">项目浏览器 - 技师学院机电培训...</div>
<div class="a" style="left:2px;top:716px;width:210px;height:2px;background:#a8a8a8"></div>
<script>
(function(){
var s=document.createElement('span');
s.style.cssText='position:absolute;left:-9999px;top:0;font-size:20px;white-space:nowrap;font-family:"Liberation Sans",sans-serif';
s.textContent='\u4e2d\u4e2d\u4e2d\u4e2d\u4e2d\u4e2d\u4e2d\u4e2d\u4e2d\u4e2d';
document.body.appendChild(s);
var w=s.getBoundingClientRect().width;
document.body.removeChild(s);
if(!(w>0&&w<188))return;
var r=200/w;
var re=/[\u3000-\u9fff\uff00-\uffef]+/g;
var els=document.querySelectorAll('.t');
for(var i=0;i<els.length;i++){
 var el=els[i];
 if(!/[\u3000-\u9fff]/.test(el.textContent))continue;
 var walker=document.createTreeWalker(el,NodeFilter.SHOW_TEXT,null,false);
 var nodes=[];while(walker.nextNode())nodes.push(walker.currentNode);
 nodes.forEach(function(n){
  var txt=n.nodeValue,frag=document.createDocumentFragment(),last=0,m;
  re.lastIndex=0;
  while((m=re.exec(txt))){
   if(m.index>last)frag.appendChild(document.createTextNode(txt.slice(last,m.index)));
   var sp=document.createElement('span');
   sp.style.cssText='display:inline-block;width:'+m[0].length+'em;overflow:visible';
   var inner=document.createElement('span');
   inner.style.cssText='display:inline-block;transform:scaleX('+r.toFixed(3)+');transform-origin:0 0;font-weight:bold';
   inner.textContent=m[0];
   sp.appendChild(inner);frag.appendChild(sp);
   last=m.index+m[0].length;
  }
  if(last<txt.length)frag.appendChild(document.createTextNode(txt.slice(last)));
  n.parentNode.replaceChild(frag,n);
 });
}
})();
</script>
</body></html>
